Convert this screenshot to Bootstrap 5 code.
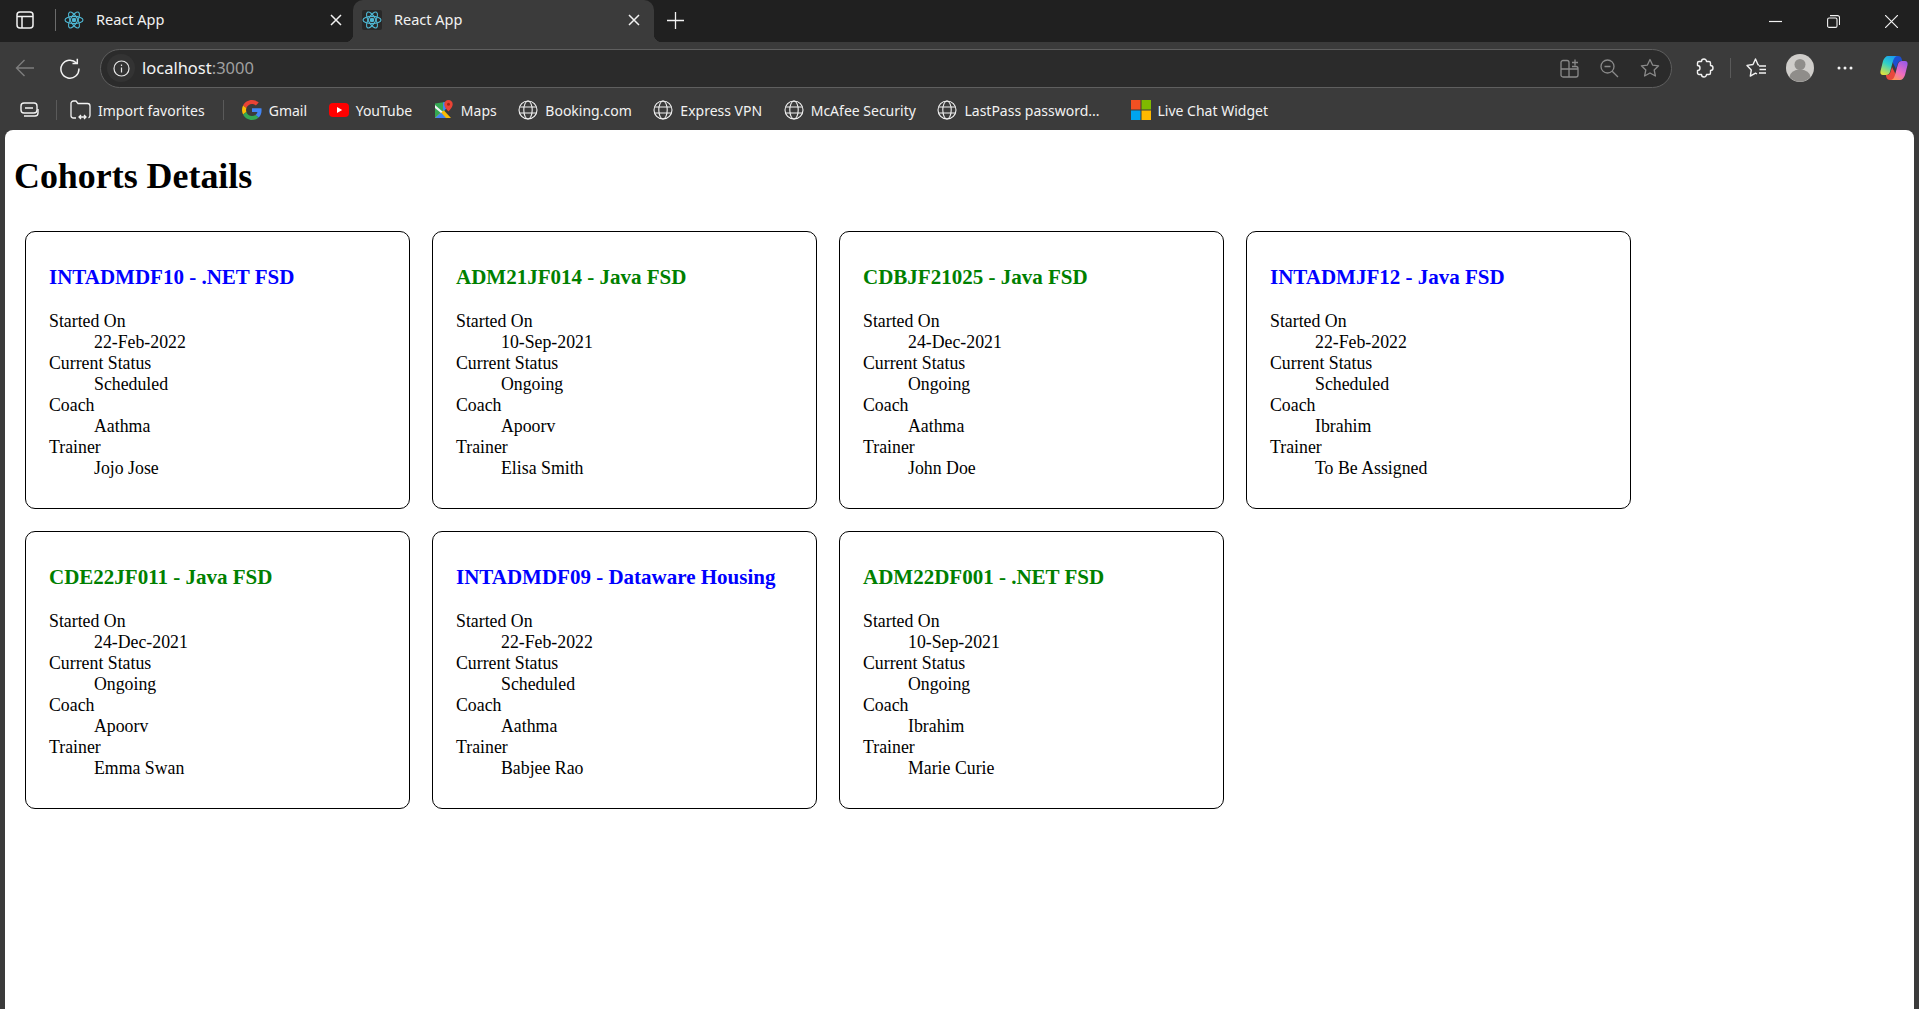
<!DOCTYPE html>
<html lang="en">
<head>
   <meta charset="UTF-8">
   <meta name="viewport" content="width=device-width, initial-scale=1.0">
   <title>React App</title>

   <link href="https://cdn.jsdelivr.net/npm/bootstrap@5.3.0/dist/css/bootstrap.min.css" rel="stylesheet">

   <style>
      html, body {
         height: 100%;
      }

      body {
         background-color: #3b3b3b;
         overflow: hidden;
         font-family: "Noto Sans", sans-serif;
      }

      svg {
         display: block;
         flex: none;
      }

      /* browser window */
      .tab-strip {
         height: 42px;
         background-color: #202020;
         color: #f2f2f2;
         font-size: 14.5px;
      }

      .strip-icon {
         margin: 0 0 2px 16px;
      }

      .strip-sep {
         width: 1px;
         height: 22px;
         margin: 0 8px 2px 21px;
         background-color: #6b6b6b;
      }

      .browser-tab {
         position: relative;
         width: 301px;
         height: 42px;
         padding: 0 14px 2px 9px;
         gap: 12px;
      }

      .browser-tab.active-tab {
         background-color: #3b3b3b;
         border-radius: 10px 10px 0 0;
      }

      .active-tab::before,
      .active-tab::after {
         content: "";
         position: absolute;
         bottom: 0;
         width: 8px;
         height: 8px;
      }

      .active-tab::before {
         left: -8px;
         background: radial-gradient(circle at 0 0, #202020 8px, #3b3b3b 8.5px);
      }

      .active-tab::after {
         right: -8px;
         background: radial-gradient(circle at 100% 0, #202020 8px, #3b3b3b 8.5px);
      }

      .tab-first {
         width: 289px;
         padding: 0 11px 2px 0;
      }

      .tab-label {
         flex-grow: 1;
      }

      .icon-dark {
         background-color: #282828;
         border-radius: 2px;
      }

      .new-tab {
         margin: 0 0 2px 13px;
      }

      .window-btns {
         margin-left: auto;
         margin-right: 21px;
         gap: 45px;
      }

      .tool-row {
         height: 46px;
         padding-top: 6px;
         background-color: #3b3b3b;
      }

      .back-btn {
         margin-left: 15px;
      }

      .reload-btn {
         margin-left: 24px;
      }

      .url-box {
         width: 1572px;
         height: 39px;
         margin-left: 20px;
         padding: 0 11px 0 6px;
         border: 1px solid #5f5f5f;
         border-radius: 20px;
         background-color: #2b2b2b;
         color: #f4f4f4;
         font-size: 16.5px;
      }

      .info-wrap {
         width: 28px;
         height: 28px;
         margin-right: 7px;
         border-radius: 50%;
         background-color: #333;
      }

      .url-port {
         color: #a0a0a0;
      }

      .url-end {
         margin-left: auto;
         gap: 21px;
      }

      .ext-btn {
         margin-left: 24px;
      }

      .bar-sep {
         width: 1px;
         height: 20px;
         background-color: #5a5a5a;
      }

      .tool-sep {
         margin-left: 16px;
      }

      .fav-btn {
         margin-left: 15px;
      }

      .avatar-btn {
         margin-left: 20px;
      }

      .dots-btn {
         margin-left: 23px;
      }

      .copilot-btn {
         margin-left: 27px;
      }

      .mark-row {
         height: 42px;
         padding: 2px 0 0 20px;
         background-color: #3b3b3b;
         color: #f2f2f2;
         font-size: 14px;
         white-space: nowrap;
      }

      .mark-sep-a {
         margin: 0 13px 0 16px;
      }

      .mark-sep-b {
         margin: 0 18px;
      }

      .mark-item {
         gap: 7px;
         margin-right: 21.6px;
      }

      .mark-item.mark-import {
         margin-right: 0;
      }

      .mark-item.mark-wide {
         margin-right: 31px;
      }

      /* page */
      .page-area {
         height: calc(100% - 130px);
         margin: 0 5px;
         padding: 0 9px;
         background-color: #fff;
         border-radius: 8px 8px 0 0;
         color: #000;
         font-family: "Liberation Serif", "Times New Roman", serif;
         font-size: 17.8px;
         line-height: 21px;
      }

      .page-title {
         margin: 0;
         padding-top: 26px;
         font-family: inherit;
         font-size: 35.9px;
         font-weight: 700;
         line-height: 40px;
      }

      .cohort-list {
         margin-top: 35px;
         padding-left: 11px;
         gap: 22px;
      }

      .cohort-box {
         width: 385px;
         height: 278px;
         padding: 33px 23px 0;
         border: 1px solid #000;
         border-radius: 10px;
      }

      .cohort-name {
         margin: 0 0 22px;
         font-family: inherit;
         font-size: 21px;
         font-weight: 700;
         line-height: 24px;
      }

      .is-scheduled {
         color: #00f;
      }

      .is-ongoing {
         color: #008000;
      }

      .cohort-box dl {
         margin: 0;
      }

      .cohort-box dt {
         font-weight: 400;
      }

      .cohort-box dd {
         margin: 0 0 0 45px;
      }
   </style>
</head>
<body>

   <!-- browser chrome -->
   <div class="tab-strip d-flex align-items-center">
      <svg class="strip-icon" width="18" height="18" viewBox="0 0 18 18" fill="none" stroke="#f2f2f2" stroke-width="1.5"><rect x="1" y="1" width="16" height="16" rx="3"/><path d="M1 5.5h16M6 5.5V17"/></svg>
      <div class="strip-sep"></div>
      <div class="browser-tab tab-first d-flex align-items-center">
         <svg width="20" height="20" viewBox="0 0 20 20" fill="none" stroke="#4fb8d4" stroke-width="1.1"><circle cx="10" cy="10" r="1.7" fill="#4fb8d4"/><ellipse cx="10" cy="10" rx="9" ry="3.6"/><ellipse cx="10" cy="10" rx="9" ry="3.6" transform="rotate(60 10 10)"/><ellipse cx="10" cy="10" rx="9" ry="3.6" transform="rotate(120 10 10)"/></svg>
         <span class="tab-label">React App</span>
         <svg width="12" height="12" viewBox="0 0 12 12" stroke="#f2f2f2" stroke-width="1.5"><path d="M1 1l10 10M11 1L1 11"/></svg>
      </div>
      <div class="browser-tab active-tab d-flex align-items-center">
         <svg class="icon-dark" width="20" height="20" viewBox="0 0 20 20" fill="none" stroke="#4fb8d4" stroke-width="1.1"><circle cx="10" cy="10" r="1.7" fill="#4fb8d4"/><ellipse cx="10" cy="10" rx="9" ry="3.6"/><ellipse cx="10" cy="10" rx="9" ry="3.6" transform="rotate(60 10 10)"/><ellipse cx="10" cy="10" rx="9" ry="3.6" transform="rotate(120 10 10)"/></svg>
         <span class="tab-label">React App</span>
         <svg width="12" height="12" viewBox="0 0 12 12" stroke="#f2f2f2" stroke-width="1.5"><path d="M1 1l10 10M11 1L1 11"/></svg>
      </div>
      <svg class="new-tab" width="17" height="17" viewBox="0 0 17 17" stroke="#f2f2f2" stroke-width="1.3"><path d="M8.5 0v17M0 8.5h17"/></svg>
      <div class="window-btns d-flex align-items-center">
         <svg width="13" height="13" viewBox="0 0 13 13" stroke="#f2f2f2" stroke-width="1.2"><path d="M0 6.5h13"/></svg>
         <svg width="13" height="13" viewBox="0 0 13 13" fill="none" stroke="#f2f2f2" stroke-width="1.1"><rect x=".6" y="3" width="9.4" height="9.4" rx="1.5"/><path d="M3 .6h7.5a2 2 0 0 1 2 2V10"/></svg>
         <svg width="13" height="13" viewBox="0 0 13 13" stroke="#f2f2f2" stroke-width="1.2"><path d="M0 0l13 13M13 0L0 13"/></svg>
      </div>
   </div>

   <div class="tool-row d-flex align-items-center">
      <svg class="back-btn" width="20" height="20" viewBox="0 0 20 20" fill="none" stroke="#7d7d7d" stroke-width="1.4"><path d="M19 10H1.5M9.5 2l-8 8 8 8"/></svg>
      <svg class="reload-btn" width="21" height="21" viewBox="0 0 21 21" fill="none" stroke="#f2f2f2" stroke-width="1.5"><path d="M17.5 5a9 9 0 1 0 2.4 5.5"/><path d="M18.3 .8V5.6h-4.8"/></svg>
      <div class="url-box d-flex align-items-center">
         <div class="info-wrap d-flex align-items-center justify-content-center">
            <svg width="17" height="17" viewBox="0 0 17 17" fill="none" stroke="#e6e6e6" stroke-width="1.2"><circle cx="8.5" cy="8.5" r="7.5"/><path d="M8.5 7.5v5M8.5 4.5v1.4"/></svg>
         </div>
         <span>localhost<span class="url-port">:3000</span></span>
         <div class="url-end d-flex align-items-center">
            <svg width="19" height="19" viewBox="0 0 19 19" fill="none" stroke="#8a8a8a" stroke-width="1.3"><path d="M9 3.5V18H3a2 2 0 0 1-2-2V3.500a2 2 0 0 1 2-2h4a2 2 0 0 1 2 2zM1 10h17v6a2 2 0 0 1-2 2H9M12 7.500h4a2 2 0 0 1 2 2v.5M15 .5v6M12 3.500h6"/></svg>
            <svg width="19" height="19" viewBox="0 0 19 19" fill="none" stroke="#8a8a8a" stroke-width="1.3"><circle cx="7.500" cy="7.500" r="6.500"/><path d="M12.200 12.200L18 18M4.500 7.500h6"/></svg>
            <svg width="20" height="20" viewBox="0 0 20 20" fill="none" stroke="#8a8a8a" stroke-width="1.3" stroke-linejoin="round"><path d="M10 1.500l2.600 5.600 6 .7-4.400 4.200 1.200 6L10 15l-5.400 3 1.200-6L1.400 7.800l6-.7z"/></svg>
         </div>
      </div>
      <svg class="ext-btn" width="18" height="20" viewBox="0 0 18 20" fill="none" stroke="#f2f2f2" stroke-width="1.4" stroke-linejoin="round"><path d="M5.500 3.500a2.500 2.500 0 0 1 5 0H13A1.500 1.500 0 0 1 14.500 5v2.500a2.500 2.500 0 0 1 0 5V15a1.500 1.500 0 0 1-1.500 1.500h-2.500a2.500 2.500 0 0 1-5 0H3A1.500 1.500 0 0 1 1.500 15v-2.500a2.500 2.500 0 0 0 0-5V5A1.500 1.500 0 0 1 3 3.500z"/></svg>
      <div class="bar-sep tool-sep"></div>
      <svg class="fav-btn" width="20" height="20" viewBox="0 0 20 20" fill="none" stroke="#f2f2f2" stroke-width="1.4" stroke-linejoin="round"><path d="M13 7l-1-.2L9.500 1 7 6.500l-6 .9 4.300 4.500-1 6.200 5.200-2.900 1.500.8M13 8h7M13.500 11.500H20M13 15h7"/></svg>
      <svg class="avatar-btn" width="28" height="28" viewBox="0 0 28 28"><circle cx="14" cy="14" r="14" fill="#cfcdca"/><circle cx="14" cy="10.500" r="5.500" fill="#8f8d8a"/><path d="M3.500 23a10.500 7.500 0 0 1 21 0a14 14 0 0 1-21 0z" fill="#8f8d8a"/></svg>
      <svg class="dots-btn" width="16" height="20" viewBox="0 0 16 20" fill="#f2f2f2"><circle cx="2" cy="10" r="1.500"/><circle cx="8" cy="10" r="1.500"/><circle cx="14" cy="10" r="1.500"/></svg>
      <svg class="copilot-btn" width="28" height="26" viewBox="0 0 28 26"><defs><linearGradient id="copA" x1=".7" y1="0" x2=".2" y2="1"><stop offset="0" stop-color="#1a9cf0"/><stop offset=".45" stop-color="#2fd0c8"/><stop offset="1" stop-color="#e4e33c"/></linearGradient><linearGradient id="copB" x1=".8" y1="0" x2=".2" y2="1"><stop offset="0" stop-color="#9a5ae8"/><stop offset=".55" stop-color="#ee6cc0"/><stop offset="1" stop-color="#ff9a50"/></linearGradient></defs><path d="M14 1h4c2 0 3.200 1 3.700 3l.5 2h-1c-2 0-3 1-3.700 3l-1.500 5-4-8z" fill="#1d4fd0"/><path d="M14 25h-4c-2 0-3.200-1-3.700-3l-.5-2h1c2 0 3-1 3.700-3l1.500-5 4 8z" fill="#e8483c"/><path d="M8 1h10c-3 0-4 2-5 5l-3 11c-.7 2-2 3-4 3H3c-2 0-3-1.500-2.500-4L3 6C4 3 6 1 8 1z" fill="url(#copA)"/><path d="M20 25H10c3 0 4-2 5-5l3-11c.7-2 2-3 4-3h3c2 0 3 1.500 2.500 4L25 20c-1 3-3 5-5 5z" fill="url(#copB)"/></svg>
   </div>

   <div class="mark-row d-flex align-items-center">
      <svg width="20" height="18" viewBox="0 0 20 18" fill="none" stroke="#f2f2f2" stroke-width="1.4"><rect x="1" y="2" width="16" height="10" rx="3"/><path d="M5 7h8M4 15h11a3 3 0 0 0 3-3V8"/></svg>
      <div class="bar-sep mark-sep-a"></div>
      <div class="mark-item mark-import d-flex align-items-center">
         <svg width="21" height="20" viewBox="0 0 21 20" fill="none" stroke="#f2f2f2" stroke-width="1.3"><path d="M6 18H3.500A2.500 2.500 0 0 1 1 15.500v-12A2.500 2.500 0 0 1 3.500 1H6l2 2.500h9.500A2.500 2.500 0 0 1 20 6v9.500a2.500 2.500 0 0 1-1.500 2.300M9 17h7M11 15l-2 2 2 2M14 15l2 2-2 2"/></svg>
         <span>Import favorites</span>
      </div>
      <div class="bar-sep mark-sep-b"></div>
      <div class="mark-item d-flex align-items-center">
         <svg width="20" height="20" viewBox="0 0 48 48"><path fill="#ea4335" d="M24 9.500c3.500 0 6.700 1.200 9.200 3.600l6.900-6.900C35.900 2.400 30.500 0 24 0 14.600 0 6.500 5.400 2.600 13.200l8 6.200C12.500 13.700 17.800 9.500 24 9.500z"/><path fill="#4285f4" d="M47 24.500c0-1.600-.1-3.100-.4-4.500H24v9h13c-.6 3-2.300 5.500-4.800 7.200l7.700 6c4.500-4.200 7.100-10.300 7.100-17.700z"/><path fill="#fbbc05" d="M10.500 28.600c-.5-1.400-.8-3-.8-4.600s.3-3.200.8-4.600l-8-6.200C.9 16.500 0 20.100 0 24s.9 7.500 2.600 10.800l7.900-6.200z"/><path fill="#34a853" d="M24 48c6.500 0 11.900-2.100 15.900-5.800l-7.700-6c-2.200 1.400-4.900 2.300-8.200 2.300-6.200 0-11.500-4.200-13.400-9.900l-8 6.200C6.500 42.600 14.600 48 24 48z"/></svg>
         <span>Gmail</span>
      </div>
      <div class="mark-item d-flex align-items-center">
         <svg width="20" height="20" viewBox="0 0 20 20"><rect y="3" width="20" height="14" rx="4" fill="#f00"/><path d="M8 7l5.200 3L8 13z" fill="#fff"/></svg>
         <span>YouTube</span>
      </div>
      <div class="mark-item d-flex align-items-center">
         <svg width="20" height="20" viewBox="0 0 20 20"><path d="M1 3.500l10-1.500v9L1 18z" fill="#34a853"/><path d="M1 18L9.500 10l7.500 8z" fill="#fbbc05"/><path d="M1 18l6-5.500 5 5.500z" fill="#4285f4"/><path d="M9 2.500l2-.5 1 7-3 2z" fill="#4285f4"/><path d="M1 8l6 5 1.500-1.500L1 5z" fill="#f1f3f4"/><path d="M14.500 0a4.200 4.200 0 0 0-4.200 4.200c0 3 4.200 7.300 4.200 7.300s4.200-4.300 4.200-7.300A4.200 4.200 0 0 0 14.500 0z" fill="#ea4335"/><circle cx="14.500" cy="4.200" r="1.500" fill="#a52714"/></svg>
         <span>Maps</span>
      </div>
      <div class="mark-item d-flex align-items-center">
         <svg width="20" height="20" viewBox="0 0 20 20" fill="none" stroke="#f2f2f2" stroke-width="1.100"><circle cx="10" cy="10" r="9"/><ellipse cx="10" cy="10" rx="4.200" ry="9"/><path d="M1.800 7h16.400M1.800 13h16.400"/></svg>
         <span>Booking.com</span>
      </div>
      <div class="mark-item d-flex align-items-center">
         <svg width="20" height="20" viewBox="0 0 20 20" fill="none" stroke="#f2f2f2" stroke-width="1.100"><circle cx="10" cy="10" r="9"/><ellipse cx="10" cy="10" rx="4.200" ry="9"/><path d="M1.800 7h16.400M1.800 13h16.400"/></svg>
         <span>Express VPN</span>
      </div>
      <div class="mark-item d-flex align-items-center">
         <svg width="20" height="20" viewBox="0 0 20 20" fill="none" stroke="#f2f2f2" stroke-width="1.100"><circle cx="10" cy="10" r="9"/><ellipse cx="10" cy="10" rx="4.200" ry="9"/><path d="M1.800 7h16.400M1.800 13h16.400"/></svg>
         <span>McAfee Security</span>
      </div>
      <div class="mark-item mark-wide d-flex align-items-center">
         <svg width="20" height="20" viewBox="0 0 20 20" fill="none" stroke="#f2f2f2" stroke-width="1.100"><circle cx="10" cy="10" r="9"/><ellipse cx="10" cy="10" rx="4.200" ry="9"/><path d="M1.800 7h16.400M1.800 13h16.400"/></svg>
         <span>LastPass password...</span>
      </div>
      <div class="mark-item d-flex align-items-center">
         <svg width="20" height="20" viewBox="0 0 20 20"><rect width="9.500" height="9.500" fill="#f25022"/><rect x="10.500" width="9.500" height="9.500" fill="#7fba00"/><rect y="10.500" width="9.500" height="9.500" fill="#00a4ef"/><rect x="10.500" y="10.500" width="9.500" height="9.500" fill="#ffb900"/></svg>
         <span>Live Chat Widget</span>
      </div>
   </div>

   <!-- page content -->
   <div class="page-area">
      <h1 class="page-title">Cohorts Details</h1>

      <div class="cohort-list d-flex flex-wrap">

         <div class="cohort-box">
            <h3 class="cohort-name is-scheduled">INTADMDF10 - .NET FSD</h3>
            <dl>
               <dt>Started On</dt><dd>22-Feb-2022</dd>
               <dt>Current Status</dt><dd>Scheduled</dd>
               <dt>Coach</dt><dd>Aathma</dd>
               <dt>Trainer</dt><dd>Jojo Jose</dd>
            </dl>
         </div>

         <div class="cohort-box">
            <h3 class="cohort-name is-ongoing">ADM21JF014 - Java FSD</h3>
            <dl>
               <dt>Started On</dt><dd>10-Sep-2021</dd>
               <dt>Current Status</dt><dd>Ongoing</dd>
               <dt>Coach</dt><dd>Apoorv</dd>
               <dt>Trainer</dt><dd>Elisa Smith</dd>
            </dl>
         </div>

         <div class="cohort-box">
            <h3 class="cohort-name is-ongoing">CDBJF21025 - Java FSD</h3>
            <dl>
               <dt>Started On</dt><dd>24-Dec-2021</dd>
               <dt>Current Status</dt><dd>Ongoing</dd>
               <dt>Coach</dt><dd>Aathma</dd>
               <dt>Trainer</dt><dd>John Doe</dd>
            </dl>
         </div>

         <div class="cohort-box">
            <h3 class="cohort-name is-scheduled">INTADMJF12 - Java FSD</h3>
            <dl>
               <dt>Started On</dt><dd>22-Feb-2022</dd>
               <dt>Current Status</dt><dd>Scheduled</dd>
               <dt>Coach</dt><dd>Ibrahim</dd>
               <dt>Trainer</dt><dd>To Be Assigned</dd>
            </dl>
         </div>

         <div class="cohort-box">
            <h3 class="cohort-name is-ongoing">CDE22JF011 - Java FSD</h3>
            <dl>
               <dt>Started On</dt><dd>24-Dec-2021</dd>
               <dt>Current Status</dt><dd>Ongoing</dd>
               <dt>Coach</dt><dd>Apoorv</dd>
               <dt>Trainer</dt><dd>Emma Swan</dd>
            </dl>
         </div>

         <div class="cohort-box">
            <h3 class="cohort-name is-scheduled">INTADMDF09 - Dataware Housing</h3>
            <dl>
               <dt>Started On</dt><dd>22-Feb-2022</dd>
               <dt>Current Status</dt><dd>Scheduled</dd>
               <dt>Coach</dt><dd>Aathma</dd>
               <dt>Trainer</dt><dd>Babjee Rao</dd>
            </dl>
         </div>

         <div class="cohort-box">
            <h3 class="cohort-name is-ongoing">ADM22DF001 - .NET FSD</h3>
            <dl>
               <dt>Started On</dt><dd>10-Sep-2021</dd>
               <dt>Current Status</dt><dd>Ongoing</dd>
               <dt>Coach</dt><dd>Ibrahim</dd>
               <dt>Trainer</dt><dd>Marie Curie</dd>
            </dl>
         </div>

      </div>
   </div>

   <script src="https://cdn.jsdelivr.net/npm/bootstrap@5.3.0/dist/js/bootstrap.bundle.min.js"></script>
</body>
</html>
